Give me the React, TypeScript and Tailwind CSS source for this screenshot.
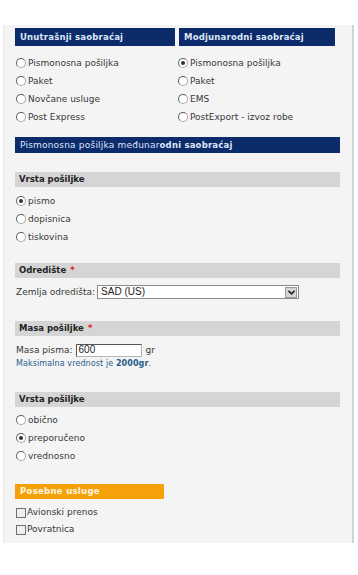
import React from "react";

function Radio({ checked = false, label }: { checked?: boolean; label: string }) {
  return (
    <div className="flex h-[18px] items-center">
      <span className="flex h-[10px] w-[10px] shrink-0 items-center justify-center rounded-full border border-t-[#5f5f5f] border-l-[#5f5f5f] border-r-[#a8a8a8] border-b-[#a8a8a8] bg-white">
        {checked && <span className="h-[4px] w-[4px] rounded-full bg-[#333333]" />}
      </span>
      <span className="ml-[2px] text-[9px] leading-none text-[#383838]">{label}</span>
    </div>
  );
}

function Check({ label }: { label: string }) {
  return (
    <div className="flex h-[17px] items-center">
      <span className="h-[10px] w-[10px] shrink-0 border border-[#6f6f6f] bg-[#f0f0f0]" />
      <span className="ml-[1px] text-[9px] leading-none text-[#383838]">{label}</span>
    </div>
  );
}

function BlueBar({ children, h = "h-[18px]" }: { children: React.ReactNode; h?: string }) {
  return (
    <div className={`flex ${h} items-center bg-[#0b2b6b] pl-[5px] text-[8.5px] font-bold leading-none tracking-[0.2px] text-[#dfe7f7]`}>
      {children}
    </div>
  );
}

function GrayBar({ children, className = "" }: { children: React.ReactNode; className?: string }) {
  return (
    <div className={`flex h-[15px] w-[325px] items-center bg-[#d5d5d5] pl-[4px] text-[8.5px] font-bold leading-none text-[#222222] ${className}`}>
      {children}
    </div>
  );
}

function Req() {
  return <span className="ml-[4px] font-bold text-[#e02020]">*</span>;
}

export default function App() {
  return (
    <div className="min-h-[575px] bg-white pt-[25px] font-['DejaVu_Sans',sans-serif]">
      <div className="ml-[3px] w-[351px] border-l border-r-2 border-l-[#e9e9e9] border-r-[#d2d2d2] bg-[#f4f4f4] pb-[5px] pl-[11px] pt-[3px]">
        <div className="grid grid-cols-[160px_156px] gap-x-[4px]">
          <div>
            <BlueBar>Unutrašnji saobraćaj</BlueBar>
            <div className="mt-[8px] pl-[1px]">
              <Radio label="Pismonosna pošiljka" />
              <Radio label="Paket" />
              <Radio label="Novčane usluge" />
              <Radio label="Post Express" />
            </div>
          </div>
          <div>
            <BlueBar>Modjunarodni saobraćaj</BlueBar>
            <div className="mt-[8px] -ml-[1px]">
              <Radio checked label="Pismonosna pošiljka" />
              <Radio label="Paket" />
              <Radio label="EMS" />
              <Radio label="PostExport - izvoz robe" />
            </div>
          </div>
        </div>

        <div className="mt-[11px] flex h-[16px] w-[325px] items-center bg-[#0b2b6b] pl-[5px] leading-none tracking-[0.2px] text-[#dfe7f7]">
          <span className="text-[9px]">Pismonosna pošiljka međunar</span>
          <span className="text-[8.5px] font-bold">odni saobraćaj</span>
        </div>

        <GrayBar className="mt-[19px]">Vrsta pošiljke</GrayBar>
        <div className="mt-[5px] pl-[1px]">
          <Radio checked label="pismo" />
          <Radio label="dopisnica" />
          <Radio label="tiskovina" />
        </div>

        <GrayBar className="mt-[17px]">
          Odredište<Req />
        </GrayBar>
        <div className="mt-[7px] flex h-[14px] items-center pl-[1px]">
          <span className="text-[9px] leading-none text-[#383838]">Zemlja odredišta:</span>
          <div className="ml-[2px] flex h-[14px] w-[202px] items-center border border-[#8a8a8a] bg-white">
            <span className="flex-1 pl-[3px] font-['Liberation_Sans',sans-serif] text-[10px] leading-none text-[#222222]">
              SAD (US)
            </span>
            <span className="mr-[1px] flex h-[11px] w-[12px] items-center justify-center border border-[#9a9a9a] bg-[#d6d6d6]">
              <svg width="7" height="5" viewBox="0 0 7 5">
                <path d="M0.5 0.8 L3.5 3.8 L6.5 0.8" stroke="#222" strokeWidth="1.6" fill="none" />
              </svg>
            </span>
          </div>
        </div>

        <GrayBar className="mt-[22px]">
          Masa pošiljke<Req />
        </GrayBar>
        <div className="mt-[7px] flex h-[14px] items-center pl-[1px]">
          <span className="text-[9px] leading-none text-[#383838]">Masa pisma:</span>
          <div className="ml-[3px] flex h-[13px] w-[66px] items-center border border-t-[#555555] border-l-[#555555] border-r-[#b5b5b5] border-b-[#b5b5b5] bg-white pl-[2px] font-['Liberation_Sans',sans-serif] text-[10px] leading-none text-[#222222]">
            600
          </div>
          <span className="ml-[4px] text-[9px] leading-none text-[#383838]">gr</span>
        </div>
        <div className="mt-[1px] flex h-[12px] items-center pl-[1px] text-[8px] leading-none tracking-[0.1px] text-[#2a5c8a]">
          Maksimalna vrednost je&nbsp;<span className="font-bold">2000gr</span>.
        </div>

        <GrayBar className="mt-[22px] h-[14px]">Vrsta pošiljke</GrayBar>
        <div className="mt-[4px] pl-[1px]">
          <Radio label="obično" />
          <Radio checked label="preporučeno" />
          <Radio label="vrednosno" />
        </div>

        <div className="mt-[19px] flex h-[15px] w-[149px] items-center bg-[#f7a10a] pl-[5px] text-[8.5px] font-bold leading-none tracking-[0.3px] text-[#fff6e0]">
          Posebne usluge
        </div>
        <div className="mt-[5px] pl-[1px]">
          <Check label="Avionski prenos" />
          <Check label="Povratnica" />
        </div>
      </div>
    </div>
  );
}
